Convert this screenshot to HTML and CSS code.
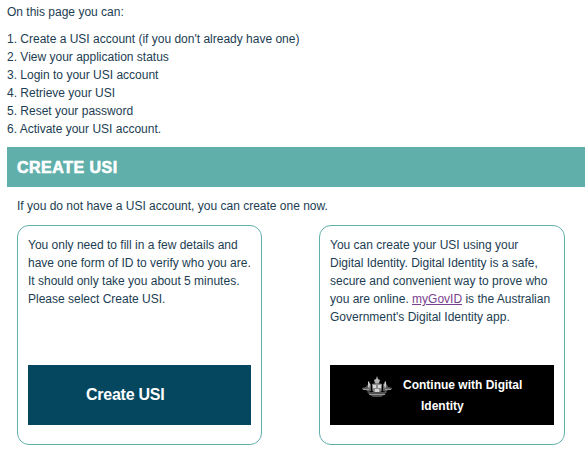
FILE: index.html
```html
<!DOCTYPE html>
<html lang="en">
<head>
<meta charset="utf-8">
<title>USI</title>
<link rel="stylesheet" href="styles.css">
</head>
<body>
<main class="page">
  <p class="lead">On this page you can:</p>
  <ol class="tasks">
    <li>1. Create a USI account (if you don't already have one)</li>
    <li>2. View your application status</li>
    <li>3. Login to your USI account</li>
    <li>4. Retrieve your USI</li>
    <li>5. Reset your password</li>
    <li>6. Activate your USI account.</li>
  </ol>
  <h2 class="banner">CREATE USI</h2>
  <p class="intro">If you do not have a USI account, you can create one now.</p>
  <div class="cards">
    <section class="card">
      <p class="card-text">You only need to fill in a few details and have one form of ID to verify who you are. It should only take you about 5 minutes. Please select Create USI.</p>
      <a class="btn btn-create" href="#">Create USI</a>
    </section>
    <section class="card">
      <p class="card-text">You can create your USI using your Digital Identity. Digital Identity is a safe, secure and convenient way to prove who you are online. <a class="link" href="#">myGovID</a> is the Australian Government's Digital Identity app.</p>
      <a class="btn btn-digital" href="#">
        <svg class="crest" viewBox="0 0 30 21" width="30" height="21" aria-hidden="true">
          <path d="M10 8l5-1 5 1-.5 7-4.500 3-4.500-3z" fill="#8c8c8c"/>
          <path d="M0 12l4-1 3-4 2 1v7l-3 1-2-2-4-1z" fill="#5e5e5e"/>
          <path d="M30 12l-4-1-2-4-3 1v7l3 1 2-2 4-1z" fill="#5e5e5e"/>
          <path d="M5 16h20l-3 3-3 2h-8l-3-2z" fill="#4e4e4e"/>
          <path d="M12 4l2-1 1-3 1 3 2 1-1 3h-4z" fill="#b4b4b4"/>
          <path d="M11 9h3v3h-3zM16 9h3v3h-3zM13 13h4v3h-4z" fill="#d6d6d6"/>
          <path d="M6 6l1-1 1 4-1 4-1-3zM24 6l-1-1-1 4 1 4 1-3z" fill="#c9c9c9"/>
          <path d="M1 13h6v1H1zM23 13h6v1h-6zM7 18h16v1H7z" fill="#989898"/>
        </svg>
        <span class="btn-label">Continue with Digital<br><span class="btn-line2">Identity</span></span>
      </a>
    </section>
  </div>
</main>
</body>
</html>
```
FILE: styles.css
```css
html, body {
  margin: 0;
  padding: 0;
  background: #fff;
}

.page {
  padding: 0 3px 0 7px;
  font: 12px/18px "Liberation Sans", Arial, sans-serif;
  color: #1c3d52;
}

.lead {
  margin: 3px 0 9px;
}

.tasks {
  margin: 0 0 9px;
  padding: 0;
  list-style: none;
}

.banner {
  margin: 0;
  height: 40px;
  padding-left: 10px;
  background: #60afab;
  color: #fff;
  font: 900 16px/41px "Liberation Sans", Arial, sans-serif;
  letter-spacing: 0.5px;
  -webkit-text-stroke: 0.6px #fff;
}

.intro {
  margin: 10px 0 10px 10px;
}

.cards {
  display: flex;
  gap: 57px;
  margin-left: 10px;
}

.card {
  box-sizing: border-box;
  width: 245px;
  height: 220px;
  padding: 10px 10px 19px;
  border: 1px solid #60afab;
  border-radius: 12px;
  display: flex;
  flex-direction: column;
  justify-content: space-between;
}

.card + .card {
  width: 246px;
}

.card-text {
  margin: 0;
}

.link {
  color: #7b3f8f;
}

.btn {
  display: flex;
  height: 60px;
  color: #fff;
  font-weight: 700;
  text-decoration: none;
}

.btn-create {
  align-items: center;
  padding-left: 58px;
  background: #04475f;
  font-size: 16px;
  letter-spacing: -0.25px;
}

.btn-digital {
  background: #000;
  align-items: flex-start;
  padding-left: 32px;
}

.crest {
  margin-top: 11px;
  flex: none;
}

.btn-label {
  margin: 10px 0 0 11px;
  line-height: 21px;
}

.btn-line2 {
  margin-left: 18px;
}
```
